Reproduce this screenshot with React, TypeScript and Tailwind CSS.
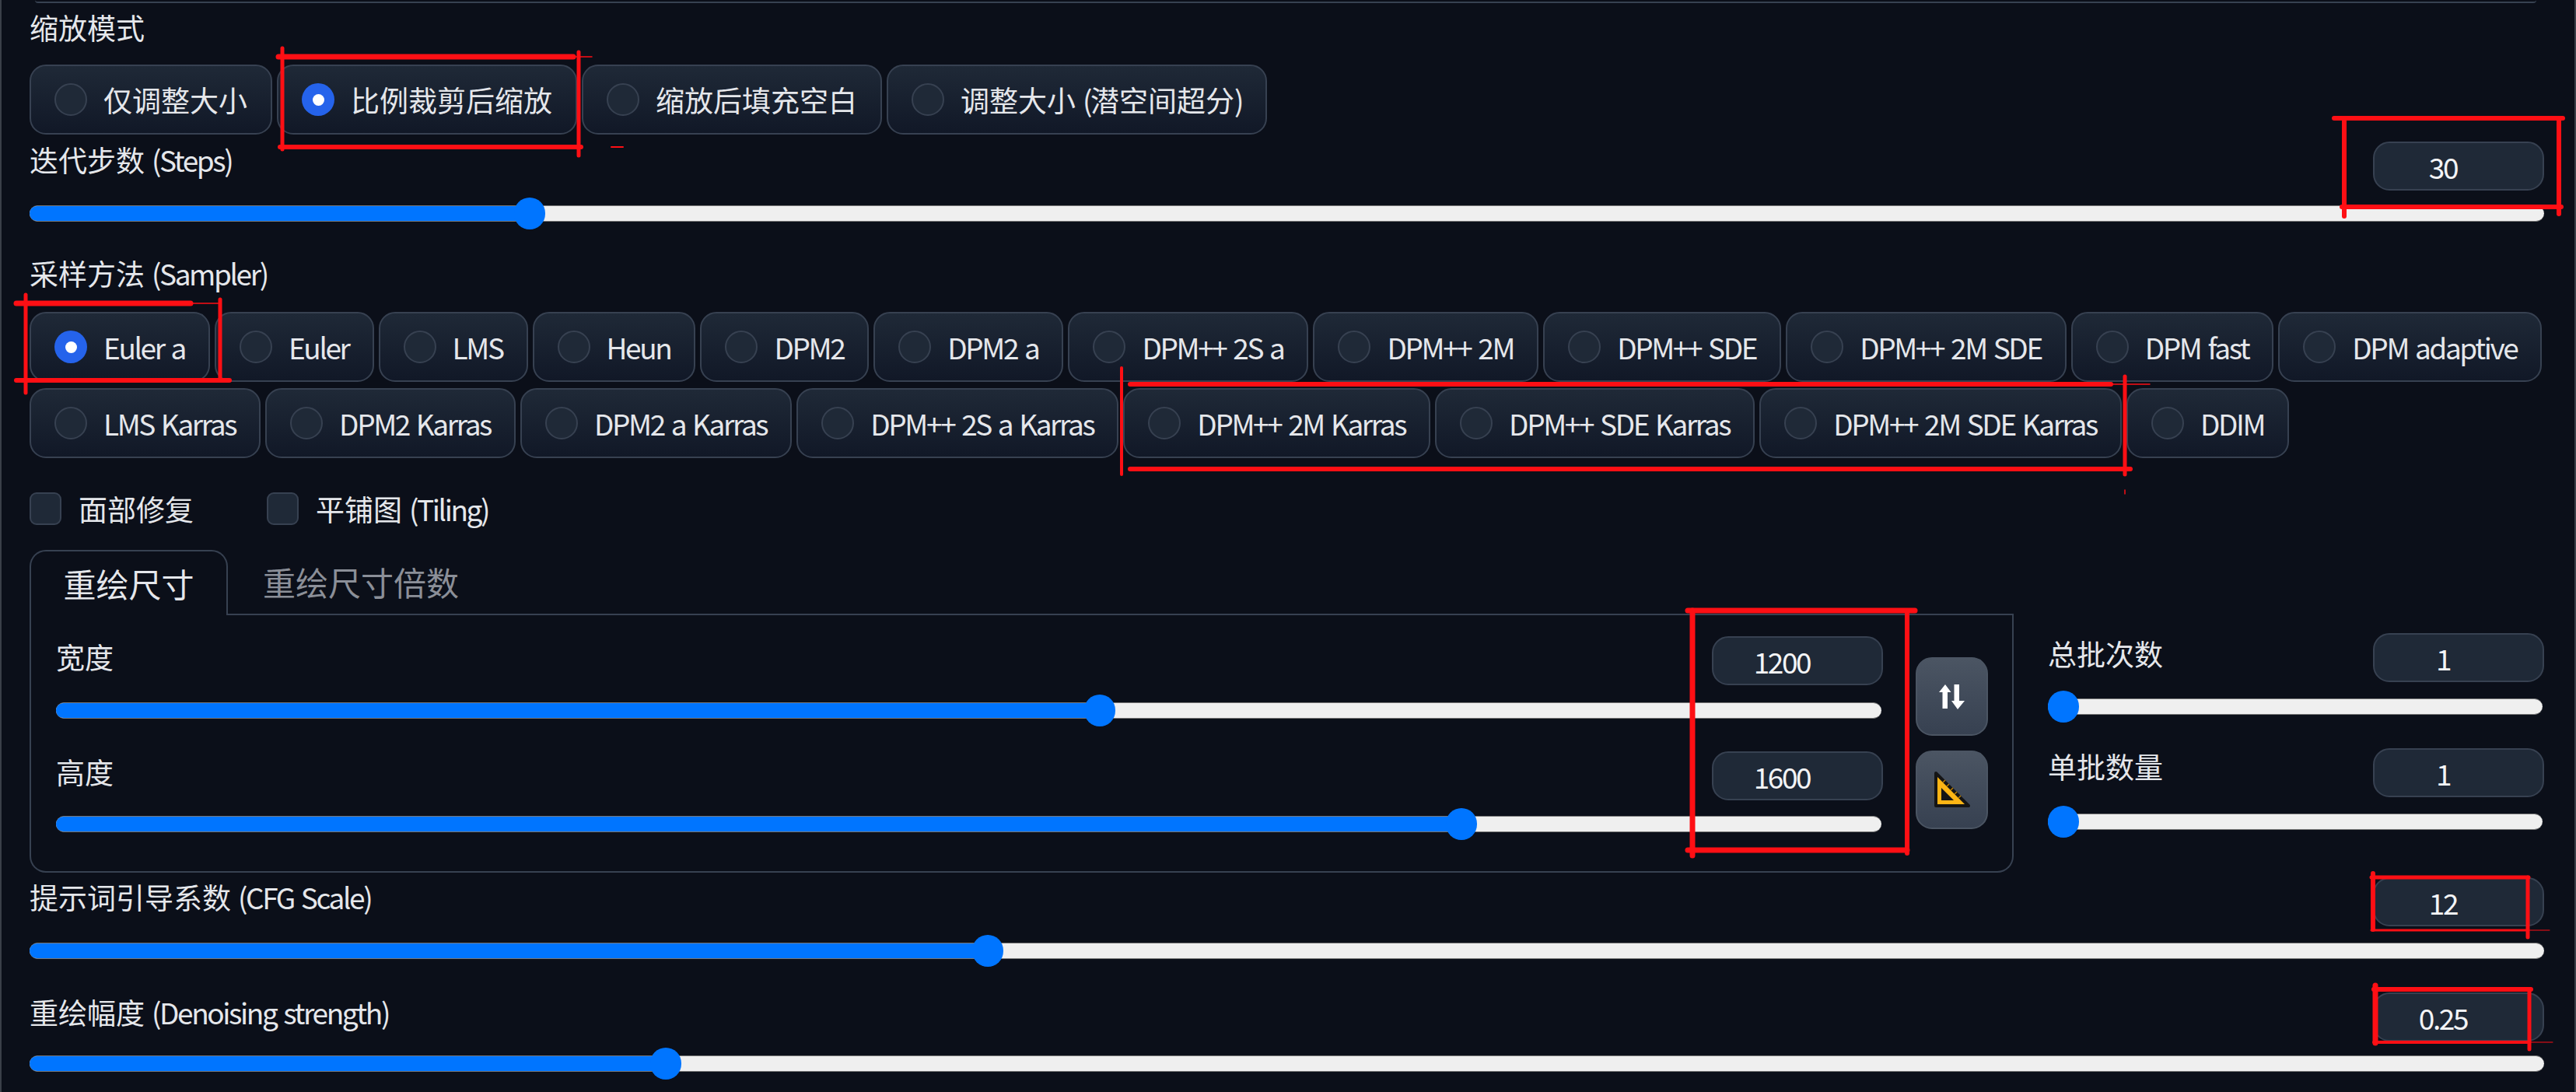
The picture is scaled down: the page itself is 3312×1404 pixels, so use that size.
import React from "react";

const topModes = ["仅调整大小", "比例裁剪后缩放", "缩放后填充空白", "调整大小 (潜空间超分)"];
const samplersA = ["Euler a", "Euler", "LMS", "Heun", "DPM2", "DPM2 a", "DPM++ 2S a", "DPM++ 2M", "DPM++ SDE", "DPM++ 2M SDE", "DPM fast", "DPM adaptive"];
const samplersB = ["LMS Karras", "DPM2 Karras", "DPM2 a Karras", "DPM++ 2S a Karras", "DPM++ 2M Karras", "DPM++ SDE Karras", "DPM++ 2M SDE Karras", "DDIM"];

// latin runs sit tighter than the cjk ones in the reference
const T = ({ text }: { text: string }) => (
  <>
    {text.split(/([\x00-\x7f]+)/).map((part, i) =>
      /[\x00-\x7f]/.test(part) ? (
        <span key={i} className="tracking-[-2.4px] [word-spacing:3px]">
          {part}
        </span>
      ) : (
        part
      ),
    )}
  </>
);

const Radio = ({ label, checked }: { label: string; checked?: boolean }) => (
  <div className="flex h-[90px] items-center gap-[21px] rounded-[21px] border-2 border-[#374151] bg-gradient-to-b from-[#1f2937] to-[#111827] px-[30px] text-[#e5e7eb]">
    {checked ? (
      <span className="flex h-[42px] w-[42px] items-center justify-center rounded-full bg-[#2563eb]">
        <span className="h-[15px] w-[15px] rounded-full bg-white" />
      </span>
    ) : (
      <span className="h-[42px] w-[42px] rounded-full border-2 border-[#374151] bg-[#1f2937]" />
    )}
    <span>
      <T text={label} />
    </span>
  </div>
);

const NumberBox = ({ value }: { value: string }) => (
  <div className="flex h-[63px] w-[220px] shrink-0 items-center justify-center rounded-[21px] border-2 border-[#374151] bg-[#1f2937] pr-[40px] text-[#f3f4f6]">
    <T text={value} />
  </div>
);

const Slider = ({ pct }: { pct: number }) => (
  <div className="relative h-[21px] rounded-full border-y border-[#777] bg-[#efefef]">
    <div className="h-full rounded-full bg-[#0075ff]" style={{ width: `${pct}%` }} />
    <div
      className="absolute top-[-11px] h-[41px] w-[40px] -translate-x-1/2 rounded-full bg-[#0075ff]"
      style={{ left: `${pct}%` }}
    />
  </div>
);

const Checkbox = ({ label }: { label: string }) => (
  <div className="flex items-center gap-[22px]">
    <span className="h-[42px] w-[41px] rounded-[9px] border-2 border-[#374151] bg-[#1f2937]" />
    <span className="text-[#e5e7eb]">
      <T text={label} />
    </span>
  </div>
);

const SwapIcon = () => (
  <svg width="33" height="32" viewBox="0 0 33 32" fill="white">
    <path d="M8 0 L15.5 10 L11 10 L11 31 L4.5 31 L4.5 10 L0 10 Z" />
    <path d="M19.5 0 L26 0 L26 21 L33 21 L24 32 L16 21 L19.5 21 Z" />
  </svg>
);

const RulerIcon = () => (
  <svg width="46" height="47" viewBox="0 0 46 47">
    <path d="M2 2 L44 44 L2 44 Z" fill="#151515" stroke="#151515" strokeWidth="4" strokeLinejoin="round" />
    <path d="M4 7 L39 42 L4 42 Z" fill="#fdb515" />
    <path d="M9 21 L25 37 L9 37 Z" fill="#151515" />
    <path d="M11 14 L14 11 M16 19 L19 16 M21 24 L24 21 M26 29 L29 26 M31 34 L34 31" stroke="#b97c00" strokeWidth="1.5" />
  </svg>
);

// hand drawn red boxes on top of the screenshot
const marks = [
  [358, 73, 737, 73, 7], [737, 73, 761, 73, 1.5], [363, 62, 363, 192, 5], [744, 67, 744, 200, 5], [360, 189, 747, 189, 6], [786, 189, 801, 189, 2],
  [3001, 152, 3295, 152, 6], [3014, 152, 3014, 278, 6], [3290, 152, 3290, 275, 6], [3011, 266, 3293, 266, 6],
  [21, 390, 245, 390, 7], [245, 390, 284, 390, 1.5], [33, 379, 33, 505, 5], [283, 385, 283, 487, 5], [21, 489, 295, 489, 6],
  [1453, 494, 2714, 494, 6], [2714, 494, 2764, 494, 1.5], [1442, 473, 1442, 610, 4], [1453, 603, 2739, 603, 6], [2732, 484, 2732, 610, 5], [2732, 630, 2732, 635, 1.5],
  [2170, 785, 2462, 785, 7], [2176, 785, 2176, 1100, 7], [2452, 785, 2452, 1097, 6], [2170, 1093, 2452, 1093, 7],
  [3049, 1128, 3251, 1128, 5], [3051, 1123, 3051, 1195, 6], [3250, 1128, 3250, 1205, 5], [3049, 1196, 3250, 1196, 3], [3250, 1196, 3278, 1196, 1],
  [3052, 1272, 3254, 1272, 6], [3054, 1267, 3054, 1341, 7], [3252, 1272, 3252, 1349, 5], [3052, 1340, 3252, 1340, 4], [3252, 1340, 3282, 1340, 1],
];

export default function App() {
  return (
    <div className="relative h-[1404px] w-[3312px] overflow-hidden border-x-2 border-[#3a3f48] bg-[#0b0f19] font-['Noto_Sans_CJK_SC','Noto_Sans',sans-serif] text-[37px] leading-[46px] text-[#e5e7eb]">
      <div className="ml-[43px] mr-[49px] h-[4px] rounded-b-[8px] border-b-2 border-[#374151]" />

      <div className="pl-[36px] pr-[39px]">
        <div className="mt-[8px]">缩放模式</div>
        <div className="mt-[25px] flex gap-[6px]">
          {topModes.map((m, i) => (
            <Radio key={m} label={m} checked={i === 1} />
          ))}
        </div>

        <div className="mt-[9px] flex items-start justify-between">
          <div>
            <T text="迭代步数 (Steps)" />
          </div>
          <NumberBox value="30" />
        </div>
        <div className="mt-[19px]">
          <Slider pct={19.9} />
        </div>

        <div className="mt-[43px]">
          <T text="采样方法 (Sampler)" />
        </div>
        <div className="mt-[27px] flex flex-wrap gap-x-[6px] gap-y-[8px]">
          {samplersA.map((s, i) => (
            <Radio key={s} label={s} checked={i === 0} />
          ))}
          {samplersB.map((s) => (
            <Radio key={s} label={s} />
          ))}
        </div>

        <div className="mt-[42px] flex gap-[94px]">
          <Checkbox label="面部修复" />
          <Checkbox label="平铺图 (Tiling)" />
        </div>

        <div className="mt-[30px] flex gap-[44px]">
          <div className="w-[2551px] shrink-0">
            <div className="flex h-[84px]">
              <div className="flex w-[255px] items-center justify-center rounded-t-[21px] border-x-2 border-t-2 border-[#374151] text-[42px]">
                重绘尺寸
              </div>
              <div className="flex flex-1 items-center border-b-2 border-[#374151] pl-[45px] text-[42px] text-[#8b8f98]">
                重绘尺寸倍数
              </div>
            </div>
            <div className="flex h-[331px] gap-[42px] rounded-b-[21px] border-x-2 border-b-2 border-[#374151] pl-[32px] pr-[31px]">
              <div className="flex-1">
                <div className="mt-[27px] flex items-start justify-between">
                  <div className="pt-[3px]">宽度</div>
                  <NumberBox value="1200" />
                </div>
                <div className="mt-[22px] mr-[2px]">
                  <Slider pct={57.2} />
                </div>
                <div className="mt-[42px] flex items-start justify-between">
                  <div className="pt-[3px]">高度</div>
                  <NumberBox value="1600" />
                </div>
                <div className="mt-[20px] mr-[2px]">
                  <Slider pct={77} />
                </div>
              </div>
              <div className="flex w-[93px] flex-col pt-[54px]">
                <div className="flex h-[101px] items-center justify-center rounded-[21px] border-2 border-[#4b5563] bg-gradient-to-b from-[#4b5563] to-[#374151]">
                  <SwapIcon />
                </div>
                <div className="mt-[19px] flex h-[101px] items-center justify-center rounded-[21px] border-2 border-[#4b5563] bg-gradient-to-b from-[#4b5563] to-[#374151]">
                  <RulerIcon />
                </div>
              </div>
            </div>
          </div>

          <div className="flex-1 pt-[107px]">
            <div className="flex items-start justify-between">
              <div className="pt-[3px]">总批次数</div>
              <NumberBox value="1" />
            </div>
            <div className="mt-[21px] mr-[2px]">
              <Slider pct={3.1} />
            </div>
            <div className="mt-[43px] flex items-start justify-between">
              <div>单批数量</div>
              <NumberBox value="1" />
            </div>
            <div className="mt-[21px] mr-[2px]">
              <Slider pct={3.1} />
            </div>
          </div>
        </div>

        <div className="mt-[6px] flex items-start justify-between">
          <div className="pt-[2px]">
            <T text="提示词引导系数 (CFG Scale)" />
          </div>
          <NumberBox value="12" />
        </div>
        <div className="mt-[21px]">
          <Slider pct={38.1} />
        </div>

        <div className="mt-[43px] flex items-start justify-between">
          <div className="pt-[2px]">
            <T text="重绘幅度 (Denoising strength)" />
          </div>
          <NumberBox value="0.25" />
        </div>
        <div className="mt-[18px]">
          <Slider pct={25.3} />
        </div>
      </div>

      <svg className="pointer-events-none absolute left-[-2px] top-0" width="3312" height="1404" viewBox="0 0 3312 1404">
        {marks.map((m, i) => (
          <line key={i} x1={m[0]} y1={m[1]} x2={m[2]} y2={m[3]} stroke="#fe0f14" strokeWidth={m[4]} strokeLinecap="round" />
        ))}
      </svg>
    </div>
  );
}
